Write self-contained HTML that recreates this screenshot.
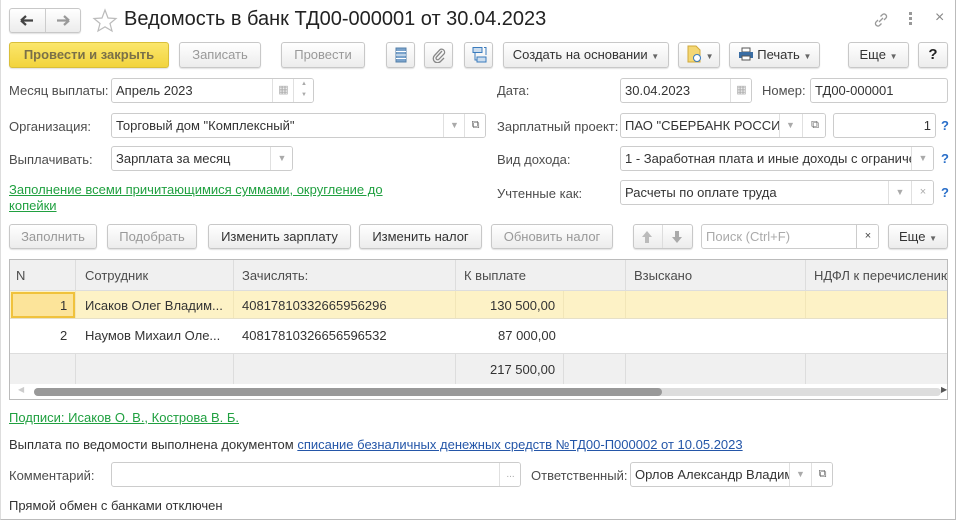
<!DOCTYPE html>
<html><head><meta charset="utf-8"><style>
*{box-sizing:border-box;margin:0;padding:0}
body{width:959px;height:523px;background:#fff;font-family:"Liberation Sans",Arial,sans-serif;font-size:13px;color:#333;position:relative;overflow:hidden}
.a{position:absolute;white-space:nowrap}
.btn{position:absolute;border:1px solid #c8c8c8;border-radius:3px;background:linear-gradient(#fff,#ececec);box-shadow:0 1px 1px rgba(0,0,0,.12);text-align:center;color:#333;line-height:24px}
.dis{color:#999}
.fld{position:absolute;border:1px solid #ccc;border-radius:3px;background:#fff;height:25px;line-height:23px;padding-left:4px;color:#333;overflow:hidden;white-space:nowrap}
.lbl{position:absolute;color:#4d4d4d;white-space:nowrap}
.sb{position:absolute;top:0;height:23px;border-left:1px solid #e0e0e0;color:#aaa;font-size:9px;text-align:center;line-height:23px;background:#fff}
.q{position:absolute;color:#2a6fc9;font-weight:bold}
.cell{position:absolute;border-right:1px solid #ddd;height:100%;top:0}
a{color:inherit}
</style></head><body>
<div class="a" style="left:0;top:0;width:956px;height:520px;border-right:1px solid #bbb;border-bottom:1px solid #bbb;border-left:1px solid #ddd"></div>

<!-- title bar -->
<div class="btn" style="left:9px;top:8px;width:72px;height:25px;"></div>
<div class="a" style="left:45px;top:9px;width:1px;height:23px;background:#ccc"></div>
<svg class="a" style="left:17px;top:13px" width="56" height="15"><path d="M4 7.5H16M4 7.5L9 3M4 7.5L9 12" stroke="#444" stroke-width="2.2" fill="none"/><path d="M52 7.5H40M52 7.5L47 3M52 7.5L47 12" stroke="#999" stroke-width="2.2" fill="none"/></svg>
<svg class="a" style="left:92px;top:8px" width="26" height="25"><path d="M13 2L16 10L24 10.5L18 15.5L20 23L13 18.8L6 23L8 15.5L2 10.5L10 10Z" fill="none" stroke="#bbb" stroke-width="1.2"/></svg>
<div class="a" style="left:124px;top:8px;font-size:20px;color:#222">Ведомость в банк ТД00-000001 от 30.04.2023</div>
<svg class="a" style="left:872px;top:11px" width="18" height="18"><path d="M7 11L11 7M6 9L4 11a2.5 2.5 0 0 0 3.5 3.5L9.5 12.5M12 9L14 7A2.5 2.5 0 0 0 10.5 3.5L8.5 5.5" stroke="#999" stroke-width="1.3" fill="none"/></svg>
<div class="a" style="left:909px;top:12px;width:3px;height:3px;background:#999;box-shadow:0 5px 0 #999,0 10px 0 #999"></div>
<div class="a" style="left:935px;top:9px;color:#888;font-size:16px">×</div>

<!-- toolbar -->
<div class="btn" style="left:9px;top:42px;width:160px;height:26px;background:linear-gradient(#fbe66c,#f2d43d);border-color:#d9bf3a;color:#7a7048;font-weight:bold">Провести и закрыть</div>
<div class="btn dis" style="left:179px;top:42px;width:82px;height:26px">Записать</div>
<div class="btn dis" style="left:281px;top:42px;width:84px;height:26px">Провести</div>
<div class="btn" style="left:386px;top:42px;width:29px;height:26px"><svg width="12" height="16" style="margin-top:4px"><rect x="1" y="1" width="10" height="14" fill="#7aa3cc" stroke="#5580aa"/><path d="M1 4.5H11M1 8H11M1 11.5H11" stroke="#fff"/></svg></div>
<div class="btn" style="left:424px;top:42px;width:29px;height:26px"><svg width="14" height="16" style="margin-top:4px"><path d="M10 4L4.5 10a1.6 1.6 0 0 0 2.3 2.3L12 7a3 3 0 0 0-4.2-4.2L2.5 8.5a4.2 4.2 0 0 0 6 6L12 11" stroke="#888" stroke-width="1.3" fill="none"/></svg></div>
<div class="btn" style="left:464px;top:42px;width:29px;height:26px"><svg width="16" height="18" style="margin-top:3px"><rect x="2" y="1.5" width="9" height="5" fill="#cde" stroke="#3a7bbd"/><rect x="6" y="11" width="9" height="5" fill="#cde" stroke="#3a7bbd"/><path d="M4 7V14H6M13 1.5H15V9" stroke="#3a7bbd" fill="none"/></svg></div>
<div class="btn" style="left:503px;top:42px;width:166px;height:26px">Создать на основании <span style="font-size:8px;color:#666">▼</span></div>
<div class="btn" style="left:678px;top:42px;width:42px;height:26px;text-align:left;padding-left:7px"><svg width="16" height="18" style="vertical-align:-4px"><path d="M2 1H10L14 5V17H2Z" fill="#f4d774" stroke="#d1a93a"/><circle cx="11" cy="13" r="3.5" fill="#fff" stroke="#3a7bbd"/></svg> <span style="font-size:8px;color:#666">▼</span></div>
<div class="btn" style="left:729px;top:42px;width:91px;height:26px"><svg width="16" height="14" style="vertical-align:-2px"><rect x="4" y="1" width="8" height="4" fill="#fff" stroke="#555"/><rect x="1" y="5" width="14" height="6" fill="#3a6da3"/><rect x="4" y="9" width="8" height="4" fill="#fff" stroke="#555"/></svg> Печать <span style="font-size:8px;color:#666">▼</span></div>
<div class="btn" style="left:848px;top:42px;width:61px;height:26px">Еще <span style="font-size:8px;color:#666">▼</span></div>
<div class="btn" style="left:918px;top:42px;width:30px;height:26px;font-weight:bold;font-size:15px;color:#222">?</div>

<!-- row 1 -->
<div class="lbl" style="left:9px;top:83px">Месяц выплаты:</div>
<div class="fld" style="left:111px;top:78px;width:203px">Апрель 2023<div class="sb" style="left:160px;width:22px;font-size:11px">▦</div><div class="sb" style="left:181px;width:21px;line-height:11px;font-size:6px">▲<br>▼</div></div>
<div class="lbl" style="left:497px;top:83px">Дата:</div>
<div class="fld" style="left:620px;top:78px;width:132px">30.04.2023<div class="sb" style="left:109px;width:22px;font-size:11px">▦</div></div>
<div class="lbl" style="left:762px;top:83px">Номер:</div>
<div class="fld" style="left:810px;top:78px;width:138px">ТД00-000001</div>

<!-- row 2 -->
<div class="lbl" style="left:9px;top:119px">Организация:</div>
<div class="fld" style="left:111px;top:113px;width:375px">Торговый дом "Комплексный"<div class="sb" style="left:331px;width:22px">▼</div><div class="sb" style="left:352px;width:22px;color:#666;font-size:11px">⧉</div></div>
<div class="lbl" style="left:497px;top:119px">Зарплатный проект:</div>
<div class="fld" style="left:620px;top:113px;width:206px">ПАО "СБЕРБАНК РОССИ<div class="sb" style="left:158px;width:22px">▼</div><div class="sb" style="left:181px;width:25px;color:#666;font-size:11px">⧉</div></div>
<div class="fld" style="left:833px;top:113px;width:103px;text-align:right;padding-right:4px">1</div>
<div class="q" style="left:941px;top:118px">?</div>

<!-- row 3 -->
<div class="lbl" style="left:9px;top:152px">Выплачивать:</div>
<div class="fld" style="left:111px;top:146px;width:182px">Зарплата за месяц<div class="sb" style="left:158px;width:23px">▼</div></div>
<div class="lbl" style="left:497px;top:152px">Вид дохода:</div>
<div class="fld" style="left:620px;top:146px;width:314px">1 - Заработная плата и иные доходы с ограниче<div class="sb" style="left:290px;width:23px">▼</div></div>
<div class="q" style="left:941px;top:151px">?</div>

<!-- row 4 -->
<div class="a" style="left:9px;top:182px;color:#20a040;text-decoration:underline;line-height:16px;white-space:normal;width:390px">Заполнение всеми причитающимися суммами, округление до копейки</div>
<div class="lbl" style="left:497px;top:186px">Учтенные как:</div>
<div class="fld" style="left:620px;top:180px;width:314px">Расчеты по оплате труда<div class="sb" style="left:267px;width:23px">▼</div><div class="sb" style="left:290px;width:23px;font-size:11px">×</div></div>
<div class="q" style="left:941px;top:185px">?</div>

<!-- table toolbar -->
<div class="btn dis" style="left:9px;top:224px;width:88px;height:25px">Заполнить</div>
<div class="btn dis" style="left:107px;top:224px;width:90px;height:25px">Подобрать</div>
<div class="btn" style="left:208px;top:224px;width:143px;height:25px">Изменить зарплату</div>
<div class="btn" style="left:359px;top:224px;width:123px;height:25px">Изменить налог</div>
<div class="btn dis" style="left:491px;top:224px;width:122px;height:25px">Обновить налог</div>
<div class="btn" style="left:633px;top:224px;width:60px;height:25px"></div>
<div class="a" style="left:662px;top:225px;width:1px;height:23px;background:#ddd"></div>
<svg class="a" style="left:640px;top:229px" width="48" height="16"><path d="M7 2L12 8H9V14H5V8H2Z" fill="#bbb"/><path d="M37 14L42 8H39V2H35V8H32Z" fill="#aaa"/></svg>
<div class="fld" style="left:701px;top:224px;width:178px;color:#aaa">Поиск (Ctrl+F)<div class="sb" style="left:154px;width:23px;color:#444;font-size:11px;border-left-color:#ccc">×</div></div>
<div class="btn" style="left:888px;top:224px;width:60px;height:25px">Еще <span style="font-size:8px;color:#666">▼</span></div>

<!-- table -->
<div class="a" style="left:9px;top:259px;width:939px;height:141px;border:1px solid #bbb;overflow:hidden;background:#fff">
  <div class="a" style="left:0;top:0;width:939px;height:31px;background:#f0f0f0;border-bottom:1px solid #ddd;color:#4d4d4d">
    <div class="cell" style="left:65px"></div><div class="cell" style="left:223px"></div><div class="cell" style="left:445px"></div><div class="cell" style="left:615px"></div><div class="cell" style="left:795px"></div>
    <div class="a" style="left:6px;top:8px">N</div><div class="a" style="left:75px;top:8px">Сотрудник</div><div class="a" style="left:232px;top:8px">Зачислять:</div><div class="a" style="left:454px;top:8px">К выплате</div><div class="a" style="left:624px;top:8px">Взыскано</div><div class="a" style="left:804px;top:8px">НДФЛ к перечислению</div>
  </div>
  <div class="a" style="left:0;top:31px;width:939px;height:28px;background:#fdf2c6;border-bottom:1px solid #e6e0c8">
    <div class="cell" style="left:65px;border-color:#f2e6b8"></div><div class="cell" style="left:223px;border-color:#f2e6b8"></div><div class="cell" style="left:445px;border-color:#f2e6b8"></div><div class="cell" style="left:553px;border-color:#f2e6b8"></div><div class="cell" style="left:615px;border-color:#f2e6b8"></div><div class="cell" style="left:795px;border-color:#f2e6b8"></div>
    <div class="a" style="left:1px;top:1px;width:64px;height:26px;background:#fce49a;border:2px solid #f0c23c"></div>
    <div class="a" style="left:50px;top:7px;color:#333">1</div><div class="a" style="left:75px;top:7px;color:#333">Исаков Олег Владим...</div><div class="a" style="left:232px;top:7px;color:#333">40817810332665956296</div><div class="a" style="left:480px;top:7px;color:#333">130 500,00</div>
  </div>
  <div class="a" style="left:0;top:59px;width:939px;height:35px;border-bottom:1px solid #ddd;color:#333">
    <div class="a" style="left:50px;top:9px">2</div><div class="a" style="left:75px;top:9px">Наумов Михаил Оле...</div><div class="a" style="left:232px;top:9px">40817810326656596532</div><div class="a" style="left:488px;top:9px">87 000,00</div>
  </div>
  <div class="a" style="left:0;top:94px;width:939px;height:30px;background:#f0f0f0">
    <div class="cell" style="left:65px"></div><div class="cell" style="left:223px"></div><div class="cell" style="left:445px"></div><div class="cell" style="left:553px"></div><div class="cell" style="left:615px"></div><div class="cell" style="left:795px"></div>
    <div class="a" style="left:480px;top:8px;color:#333">217 500,00</div>
  </div>
  <div class="a" style="left:0;top:124px;width:939px;height:17px;background:#fff">
    <div class="a" style="left:24px;top:4px;width:907px;height:8px;border-radius:4px;background:#ddd"></div>
    <div class="a" style="left:24px;top:4px;width:628px;height:8px;border-radius:4px;background:#999"></div>
    <div class="a" style="left:8px;top:1px;font-size:8px;color:#ccc">◀</div><div class="a" style="left:931px;top:1px;font-size:8px;color:#555">▶</div>
  </div>
</div>

<!-- bottom -->
<div class="a" style="left:9px;top:410px;color:#20a040;text-decoration:underline">Подписи: Исаков О. В., Кострова В. Б.</div>
<div class="a" style="left:9px;top:437px;color:#333">Выплата по ведомости выполнена документом <span style="color:#2456a8;text-decoration:underline">списание безналичных денежных средств №ТД00-П000002 от 10.05.2023</span></div>
<div class="lbl" style="left:9px;top:468px">Комментарий:</div>
<div class="fld" style="left:111px;top:462px;width:410px"><div class="sb" style="left:387px;width:22px;font-size:10px">...</div></div>
<div class="lbl" style="left:531px;top:468px">Ответственный:</div>
<div class="fld" style="left:630px;top:462px;width:203px">Орлов Александр Владим<div class="sb" style="left:158px;width:22px">▼</div><div class="sb" style="left:180px;width:22px;color:#666;font-size:11px">⧉</div></div>
<div class="a" style="left:9px;top:498px;color:#333">Прямой обмен с банками отключен</div>
</body></html>
